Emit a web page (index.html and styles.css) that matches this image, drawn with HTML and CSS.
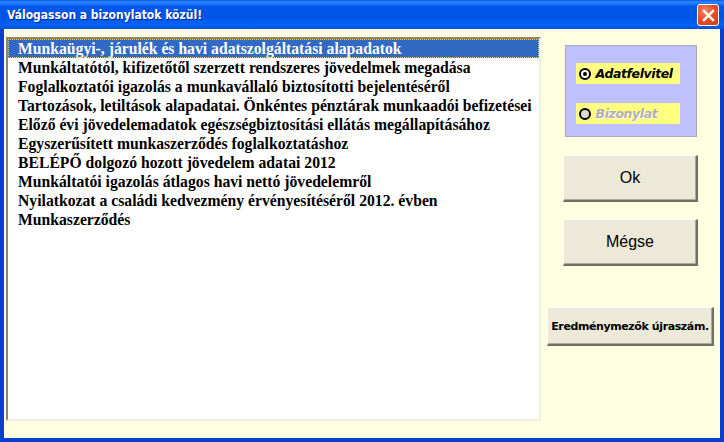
FILE: index.html
```html
<!DOCTYPE html>
<html lang="hu">
<head>
  <meta charset="UTF-8">
  <title>Válogasson a bizonylatok közül!</title>
  <link rel="stylesheet" href="styles.css">
</head>
<body>
  <div class="window">
    <div class="titlebar">
      <span class="title">Válogasson a bizonylatok közül!</span>
      <button class="close-btn" aria-label="Bezárás">
        <svg width="13" height="13" viewBox="0 0 13 13">
          <path d="M2 2 L11 11 M11 2 L2 11" stroke="#fff" stroke-width="2.4" stroke-linecap="square"/>
        </svg>
      </button>
    </div>
    <div class="client">
      <div class="listbox">
        <div class="list-item selected">Munkaügyi-, járulék és havi adatszolgáltatási alapadatok</div>
        <div class="list-item">Munkáltatótól, kifizetőtől szerzett rendszeres jövedelmek megadása</div>
        <div class="list-item">Foglalkoztatói igazolás a munkavállaló biztosítotti bejelentéséről</div>
        <div class="list-item">Tartozások, letiltások alapadatai. Önkéntes pénztárak munkaadói befizetései</div>
        <div class="list-item">Előző évi jövedelemadatok egészségbiztosítási ellátás megállapításához</div>
        <div class="list-item">Egyszerűsített munkaszerződés foglalkoztatáshoz</div>
        <div class="list-item">BELÉPŐ dolgozó hozott jövedelem adatai 2012</div>
        <div class="list-item">Munkáltatói igazolás átlagos havi nettó jövedelemről</div>
        <div class="list-item">Nyilatkozat a családi kedvezmény érvényesítéséről 2012. évben</div>
        <div class="list-item">Munkaszerződés</div>
      </div>
      <div class="side">
        <div class="option-frame">
          <label class="option">
            <span class="radio checked"></span>
            <span class="option-text">Adatfelvitel</span>
          </label>
          <label class="option disabled">
            <span class="radio"></span>
            <span class="option-text">Bizonylat</span>
          </label>
        </div>
        <button class="btn btn-big">Ok</button>
        <button class="btn btn-big">Mégse</button>
        <button class="btn btn-small">Eredménymezők újraszám.</button>
      </div>
    </div>
  </div>
</body>
</html>
```

FILE: styles.css
```css
/* General */
html, body {
  margin: 0;
  padding: 0;
  width: 724px;
  height: 442px;
  overflow: hidden;
}

.window {
  display: flex;
  flex-direction: column;
  width: 724px;
  height: 442px;
  background-color: #0a3fd0;
}

/* Title bar */
.titlebar {
  height: 29px;
  display: flex;
  align-items: center;
  justify-content: space-between;
  padding: 0 5px 0 7px;
  background: linear-gradient(#0a5fe8 0%, #2e86ff 8%, #0058ee 22%, #0054e3 60%, #0063f6 85%, #0050d8 100%);
}

.title {
  color: #fff;
  font-family: "DejaVu Sans Condensed", "DejaVu Sans", sans-serif;
  font-weight: bold;
  font-size: 12px;
  text-shadow: 1px 1px 0 #0a2a9a;
}

.close-btn {
  width: 22px;
  height: 22px;
  padding: 0;
  margin-top: 1px;
  display: flex;
  align-items: center;
  justify-content: center;
  border: 1px solid #fff;
  border-radius: 3px;
  background: radial-gradient(circle at 35% 30%, #f08a6a 0%, #e2542a 45%, #c8380e 100%);
}

/* Client area */
.client {
  flex: 1;
  display: flex;
  background-color: #ffffe1;
  margin: 0 4px 4px 4px;
  padding: 8px 0 0 2px;
}

.listbox {
  width: 531px;
  height: 380px;
  background-color: #fff;
  border-top: 2px solid #8a8678;
  border-left: 2px solid #8a8678;
  border-right: 2px solid #f0efe6;
  border-bottom: 2px solid #f0efe6;
}

.list-item {
  height: 19px;
  line-height: 19px;
  padding-left: 10px;
  font-family: "Liberation Serif", "Times New Roman", serif;
  font-weight: bold;
  font-size: 15.7px;
  color: #000;
  white-space: nowrap;
}

.list-item.selected {
  background-color: #316ac5;
  color: #fff;
  outline: 1px dotted #e8d070;
  outline-offset: -1px;
}

/* Right column */
.side {
  width: 167px;
  margin-left: 6px;
  display: flex;
  flex-direction: column;
  align-items: center;
}

.option-frame {
  width: 132px;
  height: 92px;
  margin-top: 8px;
  background-color: #c0c0ff;
  border: 1px solid #a8a8b8;
  display: flex;
  flex-direction: column;
  padding: 17px 0 0 10px;
  box-sizing: border-box;
  gap: 19px;
}

.option {
  width: 104px;
  height: 21px;
  background-color: #ffff80;
  display: flex;
  align-items: center;
  gap: 5px;
  padding-left: 3px;
  box-sizing: border-box;
}

.radio {
  width: 8px;
  height: 8px;
  border: 2px solid #000;
  border-radius: 50%;
  background-color: #fff;
  position: relative;
}

.radio.checked::after {
  content: "";
  position: absolute;
  left: 2px;
  top: 2px;
  width: 4px;
  height: 4px;
  border-radius: 50%;
  background-color: #000;
}

.option.disabled .radio {
  background-color: #dcdad0;
}

.option-text {
  font-family: "DejaVu Sans", sans-serif;
  font-weight: bold;
  font-style: italic;
  font-size: 12.5px;
  letter-spacing: -0.4px;
  color: #000;
}

.option.disabled .option-text {
  color: #b0b0b0;
  text-shadow: 1px 1px 0 #fff;
}

/* Buttons */
.btn {
  background-color: #ece9d8;
  border-top: 1px solid #fff;
  border-left: 1px solid #fff;
  border-right: 2px solid #716f64;
  border-bottom: 2px solid #716f64;
  box-shadow: inset -1px -1px 0 #aca899;
  color: #000;
  padding: 0;
  cursor: pointer;
}

.btn-big {
  width: 135px;
  height: 47px;
  font-family: "Liberation Sans", Arial, sans-serif;
  font-size: 16px;
}

.btn-big:first-of-type {
  margin-top: 18px;
}

.btn-big + .btn-big {
  margin-top: 17px;
}

.btn-small {
  width: 167px;
  height: 39px;
  margin-top: 41px;
  font-family: "DejaVu Sans", sans-serif;
  font-weight: bold;
  font-size: 11px;
  letter-spacing: -0.4px;
}
```
